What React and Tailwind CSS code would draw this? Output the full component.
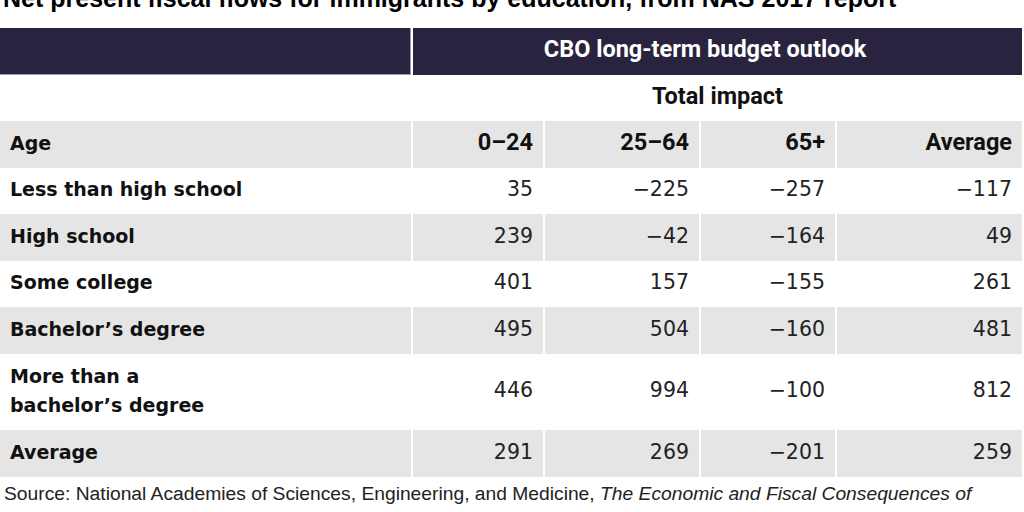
import React from "react";

const rows = [
  { label: ["Less than high school"], v: ["35", "−225", "−257", "−117"], gray: false },
  { label: ["High school"], v: ["239", "−42", "−164", "49"], gray: true },
  { label: ["Some college"], v: ["401", "157", "−155", "261"], gray: false },
  { label: ["Bachelor’s degree"], v: ["495", "504", "−160", "481"], gray: true },
  { label: ["More than a", "bachelor’s degree"], v: ["446", "994", "−100", "812"], gray: false, tall: true },
  { label: ["Average"], v: ["291", "269", "−201", "259"], gray: true },
];

const labelFont = "font-['DejaVu_Sans',sans-serif] font-bold text-[19px] text-[#111]";
const numFont = "font-['DejaVu_Sans',sans-serif] text-[20.5px] text-[#222]";
const headFont = "font-['Roboto',sans-serif] font-bold text-[23.5px]";

export default function App() {
  return (
    <div className="w-[1024px] h-[512px] overflow-hidden bg-white">
      <h1 className="font-['Liberation_Sans',sans-serif] font-bold text-[25px] leading-[25px] -mt-[14px] mb-[17px] ml-[3px] text-black whitespace-nowrap">
        Net present fiscal flows for immigrants by education, from NAS 2017 report
      </h1>
      <div className="grid grid-cols-[411px_130px_154px_134px_185px] gap-x-[2px] w-[1022px]">
        <div className="h-[47px] bg-[#29233f] border-b border-r border-[#9d99ab]" />
        <div className={`col-span-4 h-[47px] bg-[#29233f] flex items-center justify-center pr-[25px] pb-[3px] text-white ${headFont}`}>
          CBO long-term budget outlook
        </div>

        <div className="h-[46px]" />
        <div className={`col-span-4 h-[46px] flex items-center justify-center pb-[3px] text-[#111] ${headFont}`}>
          Total impact
        </div>

        <div className={`h-[47px] bg-[#e5e5e5] flex items-center pl-[10px] pb-[3px] ${labelFont}`}>Age</div>
        {["0–24", "25–64", "65+", "Average"].map((h) => (
          <div key={h} className={`h-[47px] bg-[#e5e5e5] flex items-center justify-end pr-[10px] pb-[3px] text-[#111] ${headFont}`}>
            {h}
          </div>
        ))}

        {rows.map((r, i) => {
          const h = r.tall ? "h-[76px]" : r.gray ? "h-[47px]" : "h-[46px]";
          const bg = r.gray ? "bg-[#e5e5e5]" : "bg-white";
          return (
            <React.Fragment key={i}>
              <div className={`${h} ${bg} flex flex-col justify-center pl-[10px] pb-[3px] leading-[29px] ${labelFont}`}>
                {r.label.map((l) => (
                  <span key={l}>{l}</span>
                ))}
              </div>
              {r.v.map((v, j) => (
                <div key={j} className={`${h} ${bg} flex items-center justify-end pr-[10px] pb-[3px] ${numFont}`}>
                  {v}
                </div>
              ))}
            </React.Fragment>
          );
        })}
      </div>
      <p className="-mt-[3px] ml-[4px] w-[1010px] font-['Liberation_Sans',sans-serif] text-[19.25px] leading-[40px] text-[#222]">
        Source: National Academies of Sciences, Engineering, and Medicine, <i>The Economic and Fiscal Consequences of Immigration</i> (Washington: National Academies Press, 2017).
      </p>
    </div>
  );
}
